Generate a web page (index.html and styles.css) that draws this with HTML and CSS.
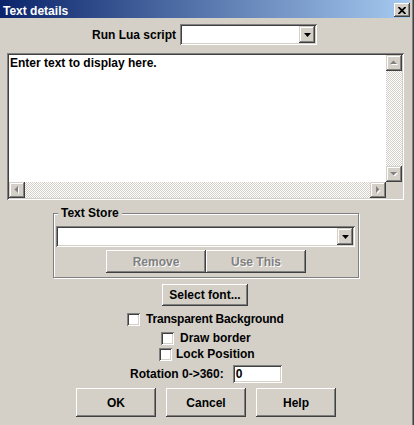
FILE: index.html
```html
<!DOCTYPE html>
<html lang="en">
<head>
<meta charset="utf-8">
<title>Text details</title>
<link rel="stylesheet" href="styles.css">
</head>
<body>
<div class="window">
  <div class="window-inner">
    <div class="titlebar">
      <span class="title">Text details</span>
      <span class="close" aria-label="Close">
        <svg width="8" height="7" viewBox="0 0 8 7"><path d="M0.5 0 L7.5 7 M7.5 0 L0.5 7" stroke="#000" stroke-width="1.8"/></svg>
      </span>
    </div>
    <div class="content">
      <div class="lua-row">
        <span class="label">Run Lua script</span>
        <div class="combo combo-lua">
          <span class="drop-btn"><svg width="7" height="4" viewBox="0 0 7 4"><path d="M0 0 H7 L3.5 4 Z" fill="#000"/></svg></span>
        </div>
      </div>

      <div class="memo">
        <div class="memo-main">
          <div class="memo-text">Enter text to display here.</div>
          <div class="vscroll">
            <span class="sbtn"><svg width="16" height="16" viewBox="0 0 16 16"><path d="M5 10 H12 L8.5 6.5 Z" fill="#fff"/><path d="M4 9 H11 L7.5 5.5 Z" fill="#808080"/></svg></span>
            <span class="track"></span>
            <span class="sbtn"><svg width="16" height="16" viewBox="0 0 16 16"><path d="M5 7 H12 L8.5 10.5 Z" fill="#fff"/><path d="M4 6 H11 L7.5 9.5 Z" fill="#808080"/></svg></span>
          </div>
        </div>
        <div class="memo-bottom">
          <div class="hscroll">
            <span class="sbtn"><svg width="16" height="16" viewBox="0 0 16 16"><path d="M10 5 V12 L6.5 8.5 Z" fill="#fff"/><path d="M9 4 V11 L5.5 7.5 Z" fill="#808080"/></svg></span>
            <span class="track"></span>
            <span class="sbtn"><svg width="16" height="16" viewBox="0 0 16 16"><path d="M7 5 V12 L10.5 8.5 Z" fill="#fff"/><path d="M6 4 V11 L9.5 7.5 Z" fill="#808080"/></svg></span>
          </div>
          <span class="corner"></span>
        </div>
      </div>

      <fieldset class="group">
        <legend>Text Store</legend>
        <div class="combo combo-store">
          <span class="drop-btn"><svg width="7" height="4" viewBox="0 0 7 4"><path d="M0 0 H7 L3.5 4 Z" fill="#000"/></svg></span>
        </div>
        <div class="store-buttons">
          <button class="btn btn-store" disabled>Remove</button>
          <button class="btn btn-store" disabled>Use This</button>
        </div>
      </fieldset>

      <button class="btn btn-font">Select font...</button>

      <label class="check check-transparent"><span class="box"></span>Transparent Background</label>
      <label class="check check-border"><span class="box"></span>Draw border</label>
      <label class="check check-lock"><span class="box"></span>Lock Position</label>

      <div class="rotation-row">
        <span class="label">Rotation 0-&gt;360:</span>
        <span class="field">0</span>
      </div>

      <div class="actions">
        <button class="btn btn-action">OK</button>
        <button class="btn btn-action">Cancel</button>
        <button class="btn btn-action">Help</button>
      </div>
    </div>
  </div>
</div>
</body>
</html>
```

FILE: styles.css
```css
* { box-sizing: border-box; }

html, body {
  margin: 0;
  padding: 0;
}

body {
  width: 414px;
  height: 425px;
  overflow: hidden;
  background: #d4d0c8;
  font-family: "Liberation Sans", Arial, sans-serif;
  font-weight: bold;
  font-size: 12px;
  color: #000;
}

.window {
  height: 425px;
  border-right: 1px solid #404040;
  background: #d4d0c8;
}

.window-inner {
  height: 100%;
  border-right: 1px solid #808080;
  padding-right: 2px;
  display: flex;
  flex-direction: column;
}

/* title bar */
.titlebar {
  height: 18px;
  flex: none;
  display: flex;
  justify-content: space-between;
  align-items: flex-start;
  background: linear-gradient(to right, #0a246a 0%, #a6caf0 100%);
  color: #fff;
}

.title {
  margin: 4px 0 0 3px;
  font-size: 12px;
  line-height: 14px;
}

.close {
  width: 16px;
  height: 14px;
  margin-top: 3px;
  display: flex;
  align-items: center;
  justify-content: center;
  background: #d4d0c8;
  box-shadow: inset -1px -1px #404040, inset 1px 1px #fff, inset -2px -2px #808080;
}

/* content */
.content {
  display: flex;
  flex-direction: column;
  align-items: flex-start;
}

.lua-row {
  margin: 6px 0 0 92px;
  display: flex;
  align-items: center;
  gap: 4px;
  height: 21px;
}

.label {
  line-height: 14px;
  white-space: nowrap;
}

.combo {
  height: 21px;
  padding: 2px;
  background: #fff;
  display: flex;
  justify-content: flex-end;
  box-shadow: inset 1px 1px #808080, inset -1px -1px #fff, inset 2px 2px #404040, inset -2px -2px #d4d0c8;
}

.combo-lua { width: 137px; }

.combo-store {
  width: 299px;
  margin-top: 6px;
}

.drop-btn {
  width: 16px;
  height: 17px;
  display: flex;
  align-items: center;
  justify-content: center;
  background: #d4d0c8;
  box-shadow: inset -1px -1px #404040, inset 1px 1px #d4d0c8, inset -2px -2px #808080, inset 2px 2px #fff;
}

/* memo */
.memo {
  margin: 8px 0 0 7px;
  width: 397px;
  height: 147px;
  padding: 2px;
  background: #fff;
  display: flex;
  flex-direction: column;
  box-shadow: inset 1px 1px #808080, inset -1px -1px #fff, inset 2px 2px #404040, inset -2px -2px #d4d0c8;
}

.memo-main {
  display: flex;
  height: 127px;
}

.memo-text {
  flex: 1;
  padding: 1px 0 0 1px;
  line-height: 15px;
}

.vscroll {
  width: 16px;
  display: flex;
  flex-direction: column;
}

.hscroll {
  flex: 1;
  display: flex;
  height: 16px;
}

.memo-bottom {
  display: flex;
  height: 16px;
}

.sbtn {
  width: 16px;
  height: 16px;
  flex: none;
  display: block;
  background: #d4d0c8;
  box-shadow: inset -1px -1px #404040, inset 1px 1px #d4d0c8, inset -2px -2px #808080, inset 2px 2px #fff;
}

.sbtn svg { display: block; }

.track {
  flex: 1;
  background: repeating-conic-gradient(#d4d0c8 0 25%, #fff 0 50%) 0 0 / 2px 2px;
}

.corner {
  width: 16px;
  height: 16px;
  background: #d4d0c8;
}

/* group box */
.group {
  margin: 7px 0 0 53px;
  width: 306px;
  padding: 0 3px 4px 2px;
  border: 1px solid #808080;
  box-shadow: inset 1px 1px #fff, 1px 1px #fff;
  min-width: 0;
}

.group legend {
  margin-left: 2px;
  padding: 0 3px;
  line-height: 13px;
  background: #d4d0c8;
}

.store-buttons {
  margin: 3px 0 0 50px;
  display: flex;
}

/* buttons */
.btn {
  font: inherit;
  color: #000;
  background: #d4d0c8;
  border: 0;
  padding: 0;
  margin: 0;
  text-align: center;
  box-shadow: inset -1px -1px #404040, inset 1px 1px #fff, inset -2px -2px #808080;
}

.btn:disabled {
  color: #808080;
  text-shadow: 1px 1px #fff;
}

.btn-store {
  width: 100px;
  height: 23px;
}

.btn-font {
  margin: 6px 0 0 162px;
  width: 86px;
  height: 22px;
}

/* checkboxes */
.check {
  display: flex;
  align-items: center;
  gap: 6px;
  height: 13px;
  line-height: 13px;
  white-space: nowrap;
}

.check-transparent { margin: 7px 0 0 127px; letter-spacing: -0.2px; }
.check-border { margin: 6px 0 0 161px; }
.check-lock { margin: 3px 0 0 159px; gap: 4px; }

.box {
  width: 13px;
  height: 13px;
  flex: none;
  background: #fff;
  box-shadow: inset 1px 1px #808080, inset -1px -1px #fff, inset 2px 2px #404040, inset -2px -2px #d4d0c8;
}

/* rotation */
.rotation-row {
  margin: 4px 0 0 130px;
  display: flex;
  align-items: center;
  gap: 9px;
  height: 18px;
}

.field {
  width: 49px;
  height: 18px;
  padding: 2px 3px 0;
  line-height: 14px;
  background: #fff;
  box-shadow: inset 1px 1px #808080, inset -1px -1px #fff, inset 2px 2px #404040, inset -2px -2px #d4d0c8;
}

/* dialog actions */
.actions {
  margin: 5px 0 0 76px;
  display: flex;
  gap: 10px;
}

.btn-action {
  width: 80px;
  height: 29px;
}
```
